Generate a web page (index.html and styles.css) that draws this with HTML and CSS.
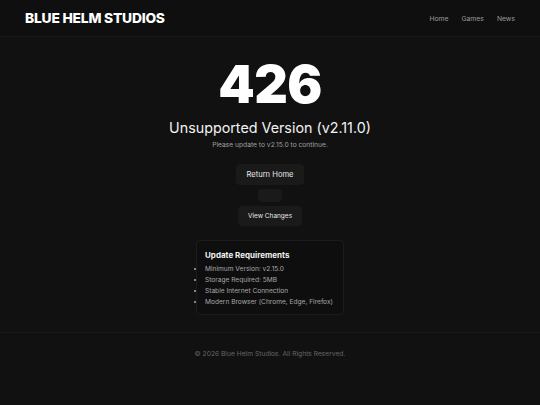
FILE: index.html
```html
<!DOCTYPE html>
<html lang="en">
<head>
    <meta charset="UTF-8">
    <title>426 - Blue Helm Studios</title>
    <link rel="stylesheet" href="styles.css">
</head>
<body>
<header class="top">
    <div class="logo">BLUE HELM STUDIOS</div>
    <nav class="nav">
        <a href="#">Home</a>
        <a href="#">Games</a>
        <a href="#">News</a>
    </nav>
</header>

<main class="page">
    <h1 class="code">426</h1>
    <h2 class="title">Unsupported Version (v2.11.0)</h2>
    <p class="hint">Please update to v2.15.0 to continue.</p>

    <div class="actions">
        <a class="btn btn-main" href="#">Return Home</a>
        <span class="btn btn-empty"></span>
        <a class="btn btn-small" href="#">View Changes</a>
    </div>

    <div class="card">
        <h3>Update Requirements</h3>
        <ul>
            <li>Minimum Version: v2.15.0</li>
            <li>Storage Required: 5MB</li>
            <li>Stable Internet Connection</li>
            <li>Modern Browser (Chrome, Edge, Firefox)</li>
        </ul>
    </div>
</main>

<footer class="foot">
    &copy; 2026 Blue Helm Studios. All Rights Reserved.
</footer>
</body>
</html>
```

FILE: styles.css
```css
* {
    padding: 0;
    margin: 0;
    box-sizing: border-box;
}

body {
    background: #111111;
    color: #ffffff;
    font-family: Inter, "Noto Sans", sans-serif;
    -webkit-font-smoothing: antialiased;
}

a {
    text-decoration: none;
    color: inherit;
}

/* header */
.top {
    height: 37px;
    padding: 0 25px;
    display: flex;
    align-items: center;
    justify-content: space-between;
    border-bottom: 1px solid #191919;
    background: #0f0f0f;
}

.logo {
    font-size: 13.8px;
    font-weight: 800;
    letter-spacing: -0.2px;
}

.nav {
    display: flex;
    gap: 13px;
    font-size: 6.8px;
}

.nav a {
    color: #9a9a9a;
}

/* main block */
.page {
    padding: 22px 0 17px;
    display: flex;
    flex-direction: column;
    align-items: center;
    text-align: center;
    border-bottom: 1px solid #1a1a1a;
}

.code {
    font-size: 52px;
    line-height: 52px;
    font-weight: 900;
    letter-spacing: -0.5px;
}

.title {
    margin-top: 8px;
    font-size: 14.3px;
    line-height: 18px;
    font-weight: 400;
    color: #f2f2f2;
}

.hint {
    margin-top: 3px;
    font-size: 6.7px;
    line-height: 10px;
    color: #a0a0a0;
}

.actions {
    margin-top: 14px;
    display: flex;
    flex-direction: column;
    align-items: center;
    gap: 4px;
}

.btn {
    display: block;
    background: #1a1a1a;
    border-radius: 4px;
    color: #e6e6e6;
}

.btn-main {
    font-size: 7.6px;
    line-height: 11px;
    padding: 5px 10px;
}

.btn-empty {
    width: 24px;
    height: 13px;
}

.btn-small {
    font-size: 6.5px;
    line-height: 10px;
    padding: 5px 10px;
}

/* requirements */
.card {
    margin-top: 14px;
    width: 148px;
    padding: 9px 8px 6px;
    text-align: left;
    background: #0e0e0e;
    border: 1px solid #1c1c1c;
    border-radius: 4px;
}

.card h3 {
    font-size: 8px;
    line-height: 11px;
    font-weight: 700;
    color: #f0f0f0;
    margin-bottom: 3px;
}

.card ul {
    padding-left: 0;
    list-style: disc outside;
}

.card li {
    font-size: 6.6px;
    line-height: 11px;
    color: #a8a8a8;
    white-space: nowrap;
}

/* footer */
.foot {
    padding: 16px 0;
    text-align: center;
    font-size: 6.7px;
    line-height: 10px;
    color: #666666;
}
```
